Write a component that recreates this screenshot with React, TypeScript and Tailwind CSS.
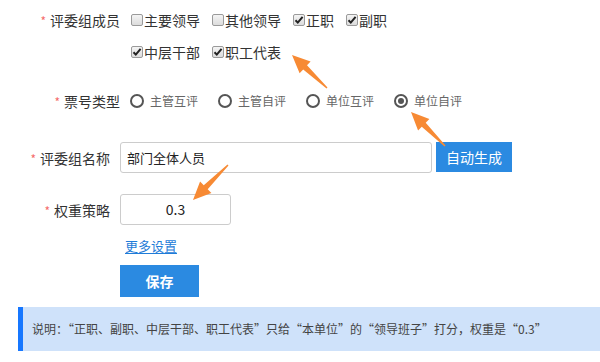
import React from 'react';

const FONT = "font-['Noto_Sans_CJK_SC','Microsoft_YaHei',sans-serif]";

function Label({ text, width, pr }: { text: string; width: string; pr: string }) {
  return (
    <div className={`${width} ${pr} shrink-0 text-right text-[14px] text-[#333] leading-none`}>
      <span className="text-[#f56c6c] mr-[4px] text-[12px]">*</span>
      {text}
    </div>
  );
}

function Check({ label, checked }: { label: string; checked?: boolean }) {
  return (
    <div className="flex items-center mr-[12px]">
      <span className="w-[12px] h-[12px] rounded-[2px] border border-[#9a9a9a] bg-gradient-to-b from-[#f4f4f4] to-[#dcdcdc] flex items-center justify-center">
        {checked && (
          <svg width="10" height="10" viewBox="0 0 10 10">
            <path d="M1.5 5.2 L3.8 7.6 L8.6 1.8" stroke="#222" strokeWidth="2" fill="none" />
          </svg>
        )}
      </span>
      <span className="ml-[1px] text-[14px] text-[#333] leading-none">{label}</span>
    </div>
  );
}

function Radio({ label, checked }: { label: string; checked?: boolean }) {
  return (
    <div className="flex items-center mr-[20px]">
      <span className="w-[14px] h-[14px] rounded-full border-2 border-[#555] flex items-center justify-center">
        {checked && <span className="w-[6px] h-[6px] rounded-full bg-[#555]" />}
      </span>
      <span className="ml-[6px] text-[12px] text-[#666] leading-none">{label}</span>
    </div>
  );
}

function arrowPoints(tx: number, ty: number, hx: number, hy: number) {
  const dx = hx - tx;
  const dy = hy - ty;
  const len = Math.hypot(dx, dy);
  const ux = dx / len;
  const uy = dy / len;
  const nx = -uy;
  const ny = ux;
  const headLen = 18;
  const headHalf = 8;
  const shaftHalf = 2.8;
  const tailHalf = 0.7;
  const bx = hx - ux * headLen;
  const by = hy - uy * headLen;
  const pts = [
    [tx + nx * tailHalf, ty + ny * tailHalf],
    [bx + nx * shaftHalf, by + ny * shaftHalf],
    [bx + nx * headHalf, by + ny * headHalf],
    [hx, hy],
    [bx - nx * headHalf, by - ny * headHalf],
    [bx - nx * shaftHalf, by - ny * shaftHalf],
    [tx - nx * tailHalf, ty - ny * tailHalf],
  ];
  return pts.map((p) => p.join(',')).join(' ');
}

export default function App() {
  return (
    <div className={`relative w-[600px] h-[362px] bg-white overflow-hidden ${FONT}`}>
      <div className="pt-[8px]">
        <div className="flex items-center h-[24px]">
          <Label text="评委组成员" width="w-[120px]" pr="pr-0" />
          <div className="flex items-center ml-[11px]">
            <Check label="主要领导" />
            <Check label="其他领导" />
            <Check label="正职" checked />
            <Check label="副职" checked />
          </div>
        </div>
        <div className="flex items-center h-[24px] mt-[8px] pl-[131px]">
          <Check label="中层干部" checked />
          <Check label="职工代表" checked />
        </div>

        <div className="flex items-center h-[24px] mt-[25px]">
          <Label text="票号类型" width="w-[120px]" pr="pr-0" />
          <div className="flex items-center ml-[10px]">
            <Radio label="主管互评" />
            <Radio label="主管自评" />
            <Radio label="单位互评" />
            <Radio label="单位自评" checked />
          </div>
        </div>

        <div className="flex items-center h-[31px] mt-[29px]">
          <Label text="评委组名称" width="w-[120px]" pr="pr-[10px]" />
          <div className="w-[312px] h-[31px] border border-[#ccc] rounded-[3px] flex items-center px-[6px] text-[13px] text-[#222]">
            部门全体人员
          </div>
          <button className="ml-[4px] w-[76px] h-[30px] self-start bg-[#2b8ae1] text-white text-[14px]">
            自动生成
          </button>
        </div>

        <div className="flex items-center h-[31px] mt-[21px]">
          <Label text="权重策略" width="w-[120px]" pr="pr-[10px]" />
          <div className="w-[111px] h-[31px] border border-[#ccc] rounded-[3px] flex items-center justify-center text-[14px] text-[#222]">
            0.3
          </div>
        </div>

        <div className="h-[20px] mt-[10px] pl-[125px] flex items-center">
          <span className="text-[13px] text-[#1f7cd8] underline underline-offset-2 leading-none">更多设置</span>
        </div>

        <div className="mt-[10px] pl-[120px]">
          <button className="w-[79px] h-[32px] bg-[#2b8ae1] text-white text-[14px] font-bold">保存</button>
        </div>

        <div className="mt-[10px] ml-[18px] h-[44px] bg-[#cfe2fa] border-l-[5px] border-[#1677ff] flex items-center pl-[9px] text-[12px] text-[#444]">
          说明：“正职、副职、中层干部、职工代表”只给“本单位”的“领导班子”打分，权重是“0.3”
        </div>
      </div>

      <svg className="absolute inset-0 pointer-events-none" width="600" height="362">
        <polygon points={arrowPoints(327, 88, 292, 55)} fill="#f78a34" />
        <polygon points={arrowPoints(445, 146, 411, 112)} fill="#f78a34" />
        <polygon points={arrowPoints(228, 165, 193, 200)} fill="#f78a34" />
      </svg>
    </div>
  );
}
